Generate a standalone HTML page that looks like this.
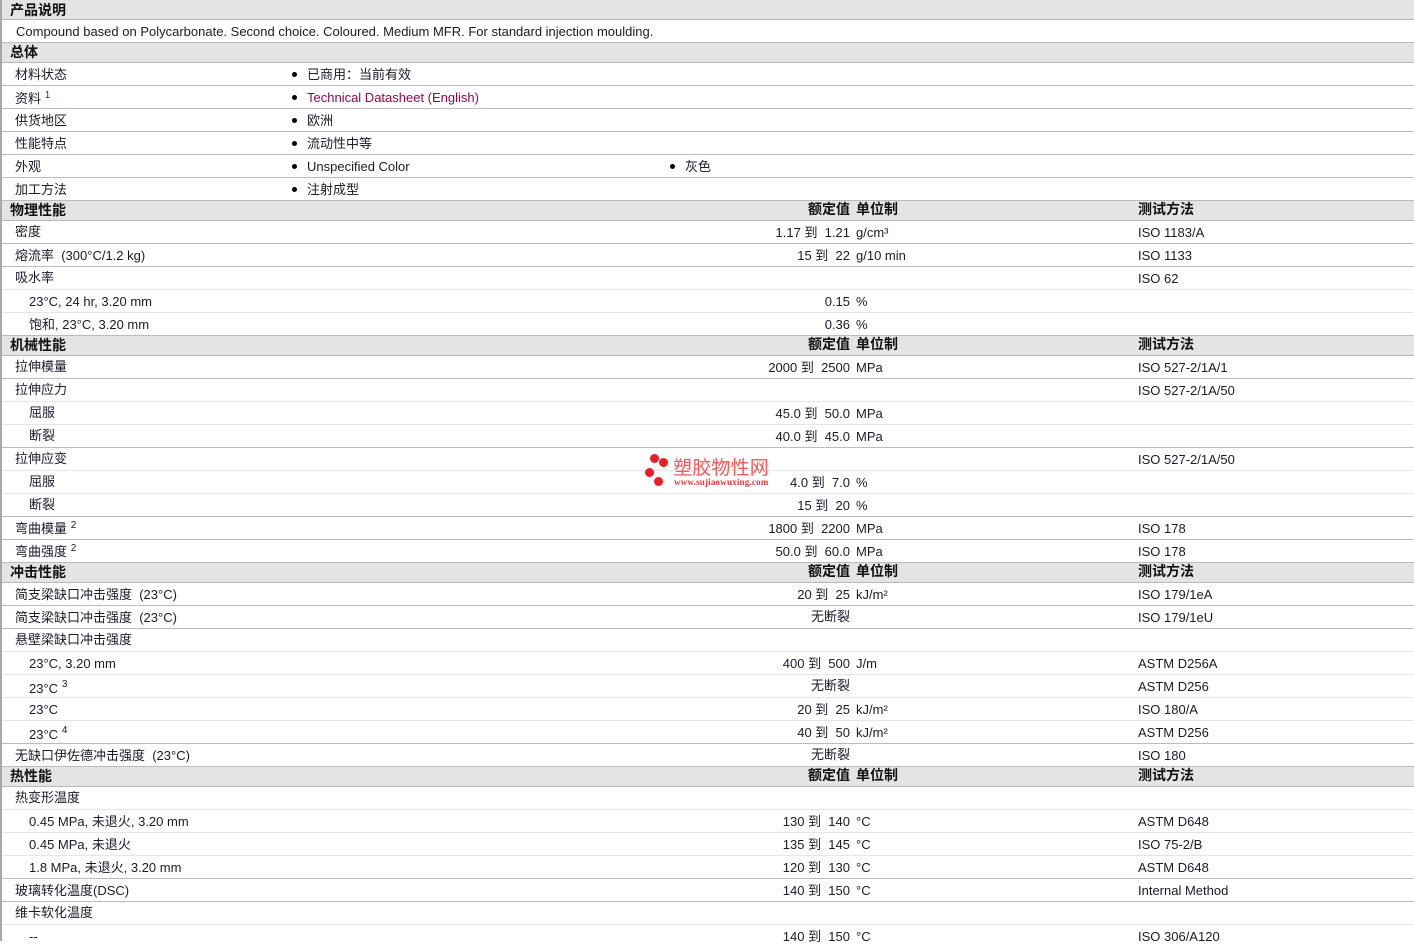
<!DOCTYPE html>
<html lang="zh">
<head>
<meta charset="utf-8">
<title>产品说明</title>
<style>
html,body{margin:0;padding:0;background:#fff}
body{position:relative;width:1414px;height:941px;overflow:hidden;font:13px/22px "Liberation Sans","WenQuanYi Zen Hei","Noto Sans CJK SC",sans-serif;color:#1a1a2a}
.strip{position:absolute;left:0;top:0;width:2px;height:941px;background:#a8a8ac;z-index:5}
.r{position:absolute;left:2px;right:0;height:23px;box-sizing:border-box;border-bottom:1px solid #bcbcc0}
.k{border-bottom-color:#e6e6e6}
.h{height:20px;background:#e4e4e4;font-weight:bold;font-size:14px;color:#111;line-height:19px;border-bottom-color:#b8b8bc}
.r span{position:absolute;top:1px;white-space:pre}
.r span.z{top:0}
.h span{top:0}
.h .v,.h .u,.h .t{top:-1px}
.r span.e{top:2px}
.r span.f{top:3px}
.n{left:8px}.l{left:13px}.s{left:27px}
.v{right:564px}.u{left:854px}.t{left:1136px}
.b{left:305px}.c{left:683px}
.d::before{content:"";position:absolute;left:-15px;top:8px;width:5px;height:5px;border-radius:50%;background:#000}
sup{font-size:10px;line-height:0;position:relative;top:0;vertical-align:super;margin-left:1px}
.f sup{top:-1px}
.a{color:#8a0a50}
.o{position:absolute;border-radius:50%;background:#ee1c25;width:9px;height:9px;z-index:6}
.w1{position:absolute;left:673px;top:458px;font-size:19px;line-height:22px;color:#f25a5a;white-space:nowrap;z-index:6;letter-spacing:.2px}
.w2{position:absolute;left:674px;top:477px;font:bold 9px/11px "Liberation Serif",serif;color:#e83a3a;white-space:nowrap;z-index:6;letter-spacing:.2px}
</style>
</head>
<body>
<div class="strip"></div>

<div class="r h" style="top:0"><span class="n" style="top:1px">产品说明</span></div>
<div class="r" style="top:20px"><span style="left:14px">Compound based on Polycarbonate. Second choice. Coloured. Medium MFR. For standard injection moulding.</span></div>

<div class="r h" style="top:43px"><span class="n">总体</span></div>
<div class="r" style="top:63px"><span class="l">材料状态</span><span class="b d">已商用：当前有效</span></div>
<div class="r" style="top:86px"><span class="l e">资料<sup class="a"> 1</sup></span><span class="b d a">Technical Datasheet (English)</span></div>
<div class="r" style="top:109px"><span class="l">供货地区</span><span class="b d">欧洲</span></div>
<div class="r" style="top:132px"><span class="l">性能特点</span><span class="b d">流动性中等</span></div>
<div class="r" style="top:155px"><span class="l">外观</span><span class="b d">Unspecified Color</span><span class="c d">灰色</span></div>
<div class="r" style="top:178px"><span class="l">加工方法</span><span class="b d">注射成型</span></div>

<div class="r h" style="top:201px"><span class="n">物理性能</span><span class="v">额定值</span><span class="u">单位制</span><span class="t">测试方法</span></div>
<div class="r" style="top:221px"><span class="l z">密度</span><span class="v">1.17 到  1.21</span><span class="u">g/cm³</span><span class="t">ISO 1183/A</span></div>
<div class="r" style="top:244px"><span class="l">熔流率  (300°C/1.2 kg)</span><span class="v">15 到  22</span><span class="u">g/10 min</span><span class="t">ISO 1133</span></div>
<div class="r k" style="top:267px"><span class="l z">吸水率</span><span class="t">ISO 62</span></div>
<div class="r k" style="top:290px"><span class="s">23°C, 24 hr, 3.20 mm</span><span class="v">0.15</span><span class="u">%</span></div>
<div class="r" style="top:313px"><span class="s">饱和, 23°C, 3.20 mm</span><span class="v">0.36</span><span class="u">%</span></div>

<div class="r h" style="top:336px"><span class="n">机械性能</span><span class="v">额定值</span><span class="u">单位制</span><span class="t">测试方法</span></div>
<div class="r" style="top:356px"><span class="l z">拉伸模量</span><span class="v">2000 到  2500</span><span class="u">MPa</span><span class="t">ISO 527-2/1A/1</span></div>
<div class="r k" style="top:379px"><span class="l z">拉伸应力</span><span class="t">ISO 527-2/1A/50</span></div>
<div class="r k" style="top:402px"><span class="s z">屈服</span><span class="v">45.0 到  50.0</span><span class="u">MPa</span></div>
<div class="r" style="top:425px"><span class="s z">断裂</span><span class="v">40.0 到  45.0</span><span class="u">MPa</span></div>
<div class="r k" style="top:448px"><span class="l z">拉伸应变</span><span class="t">ISO 527-2/1A/50</span></div>
<div class="r k" style="top:471px"><span class="s z">屈服</span><span class="v">4.0 到  7.0</span><span class="u">%</span></div>
<div class="r" style="top:494px"><span class="s z">断裂</span><span class="v">15 到  20</span><span class="u">%</span></div>
<div class="r" style="top:517px"><span class="l">弯曲模量<sup> 2</sup></span><span class="v">1800 到  2200</span><span class="u">MPa</span><span class="t">ISO 178</span></div>
<div class="r" style="top:540px"><span class="l">弯曲强度<sup> 2</sup></span><span class="v">50.0 到  60.0</span><span class="u">MPa</span><span class="t">ISO 178</span></div>

<div class="r h" style="top:563px"><span class="n">冲击性能</span><span class="v">额定值</span><span class="u">单位制</span><span class="t">测试方法</span></div>
<div class="r" style="top:583px"><span class="l">简支梁缺口冲击强度  (23°C)</span><span class="v">20 到  25</span><span class="u">kJ/m²</span><span class="t">ISO 179/1eA</span></div>
<div class="r" style="top:606px"><span class="l">简支梁缺口冲击强度  (23°C)</span><span class="v z">无断裂</span><span class="t">ISO 179/1eU</span></div>
<div class="r k" style="top:629px"><span class="l z">悬壁梁缺口冲击强度</span></div>
<div class="r k" style="top:652px"><span class="s">23°C, 3.20 mm</span><span class="v">400 到  500</span><span class="u">J/m</span><span class="t">ASTM D256A</span></div>
<div class="r k" style="top:675px"><span class="s f">23°C<sup> 3</sup></span><span class="v z">无断裂</span><span class="t">ASTM D256</span></div>
<div class="r k" style="top:698px"><span class="s">23°C</span><span class="v">20 到  25</span><span class="u">kJ/m²</span><span class="t">ISO 180/A</span></div>
<div class="r" style="top:721px"><span class="s f">23°C<sup> 4</sup></span><span class="v">40 到  50</span><span class="u">kJ/m²</span><span class="t">ASTM D256</span></div>
<div class="r" style="top:744px"><span class="l">无缺口伊佐德冲击强度  (23°C)</span><span class="v z">无断裂</span><span class="t">ISO 180</span></div>

<div class="r h" style="top:767px"><span class="n">热性能</span><span class="v">额定值</span><span class="u">单位制</span><span class="t">测试方法</span></div>
<div class="r k" style="top:787px"><span class="l z">热变形温度</span></div>
<div class="r k" style="top:810px"><span class="s">0.45 MPa, 未退火, 3.20 mm</span><span class="v">130 到  140</span><span class="u">°C</span><span class="t">ASTM D648</span></div>
<div class="r k" style="top:833px"><span class="s">0.45 MPa, 未退火</span><span class="v">135 到  145</span><span class="u">°C</span><span class="t">ISO 75-2/B</span></div>
<div class="r" style="top:856px"><span class="s">1.8 MPa, 未退火, 3.20 mm</span><span class="v">120 到  130</span><span class="u">°C</span><span class="t">ASTM D648</span></div>
<div class="r" style="top:879px"><span class="l">玻璃转化温度(DSC)</span><span class="v">140 到  150</span><span class="u">°C</span><span class="t">Internal Method</span></div>
<div class="r k" style="top:902px"><span class="l z">维卡软化温度</span></div>
<div class="r" style="top:925px;border-bottom:0"><span class="s">--</span><span class="v">140 到  150</span><span class="u">°C</span><span class="t">ISO 306/A120</span></div>

<div class="o" style="left:650px;top:454px"></div>
<div class="o" style="left:659px;top:458px"></div>
<div class="o" style="left:645px;top:468px"></div>
<div class="o" style="left:654px;top:477px"></div>
<div class="w1">塑胶物性网</div>
<div class="w2">www.sujiaowuxing.com</div>
</body>
</html>
